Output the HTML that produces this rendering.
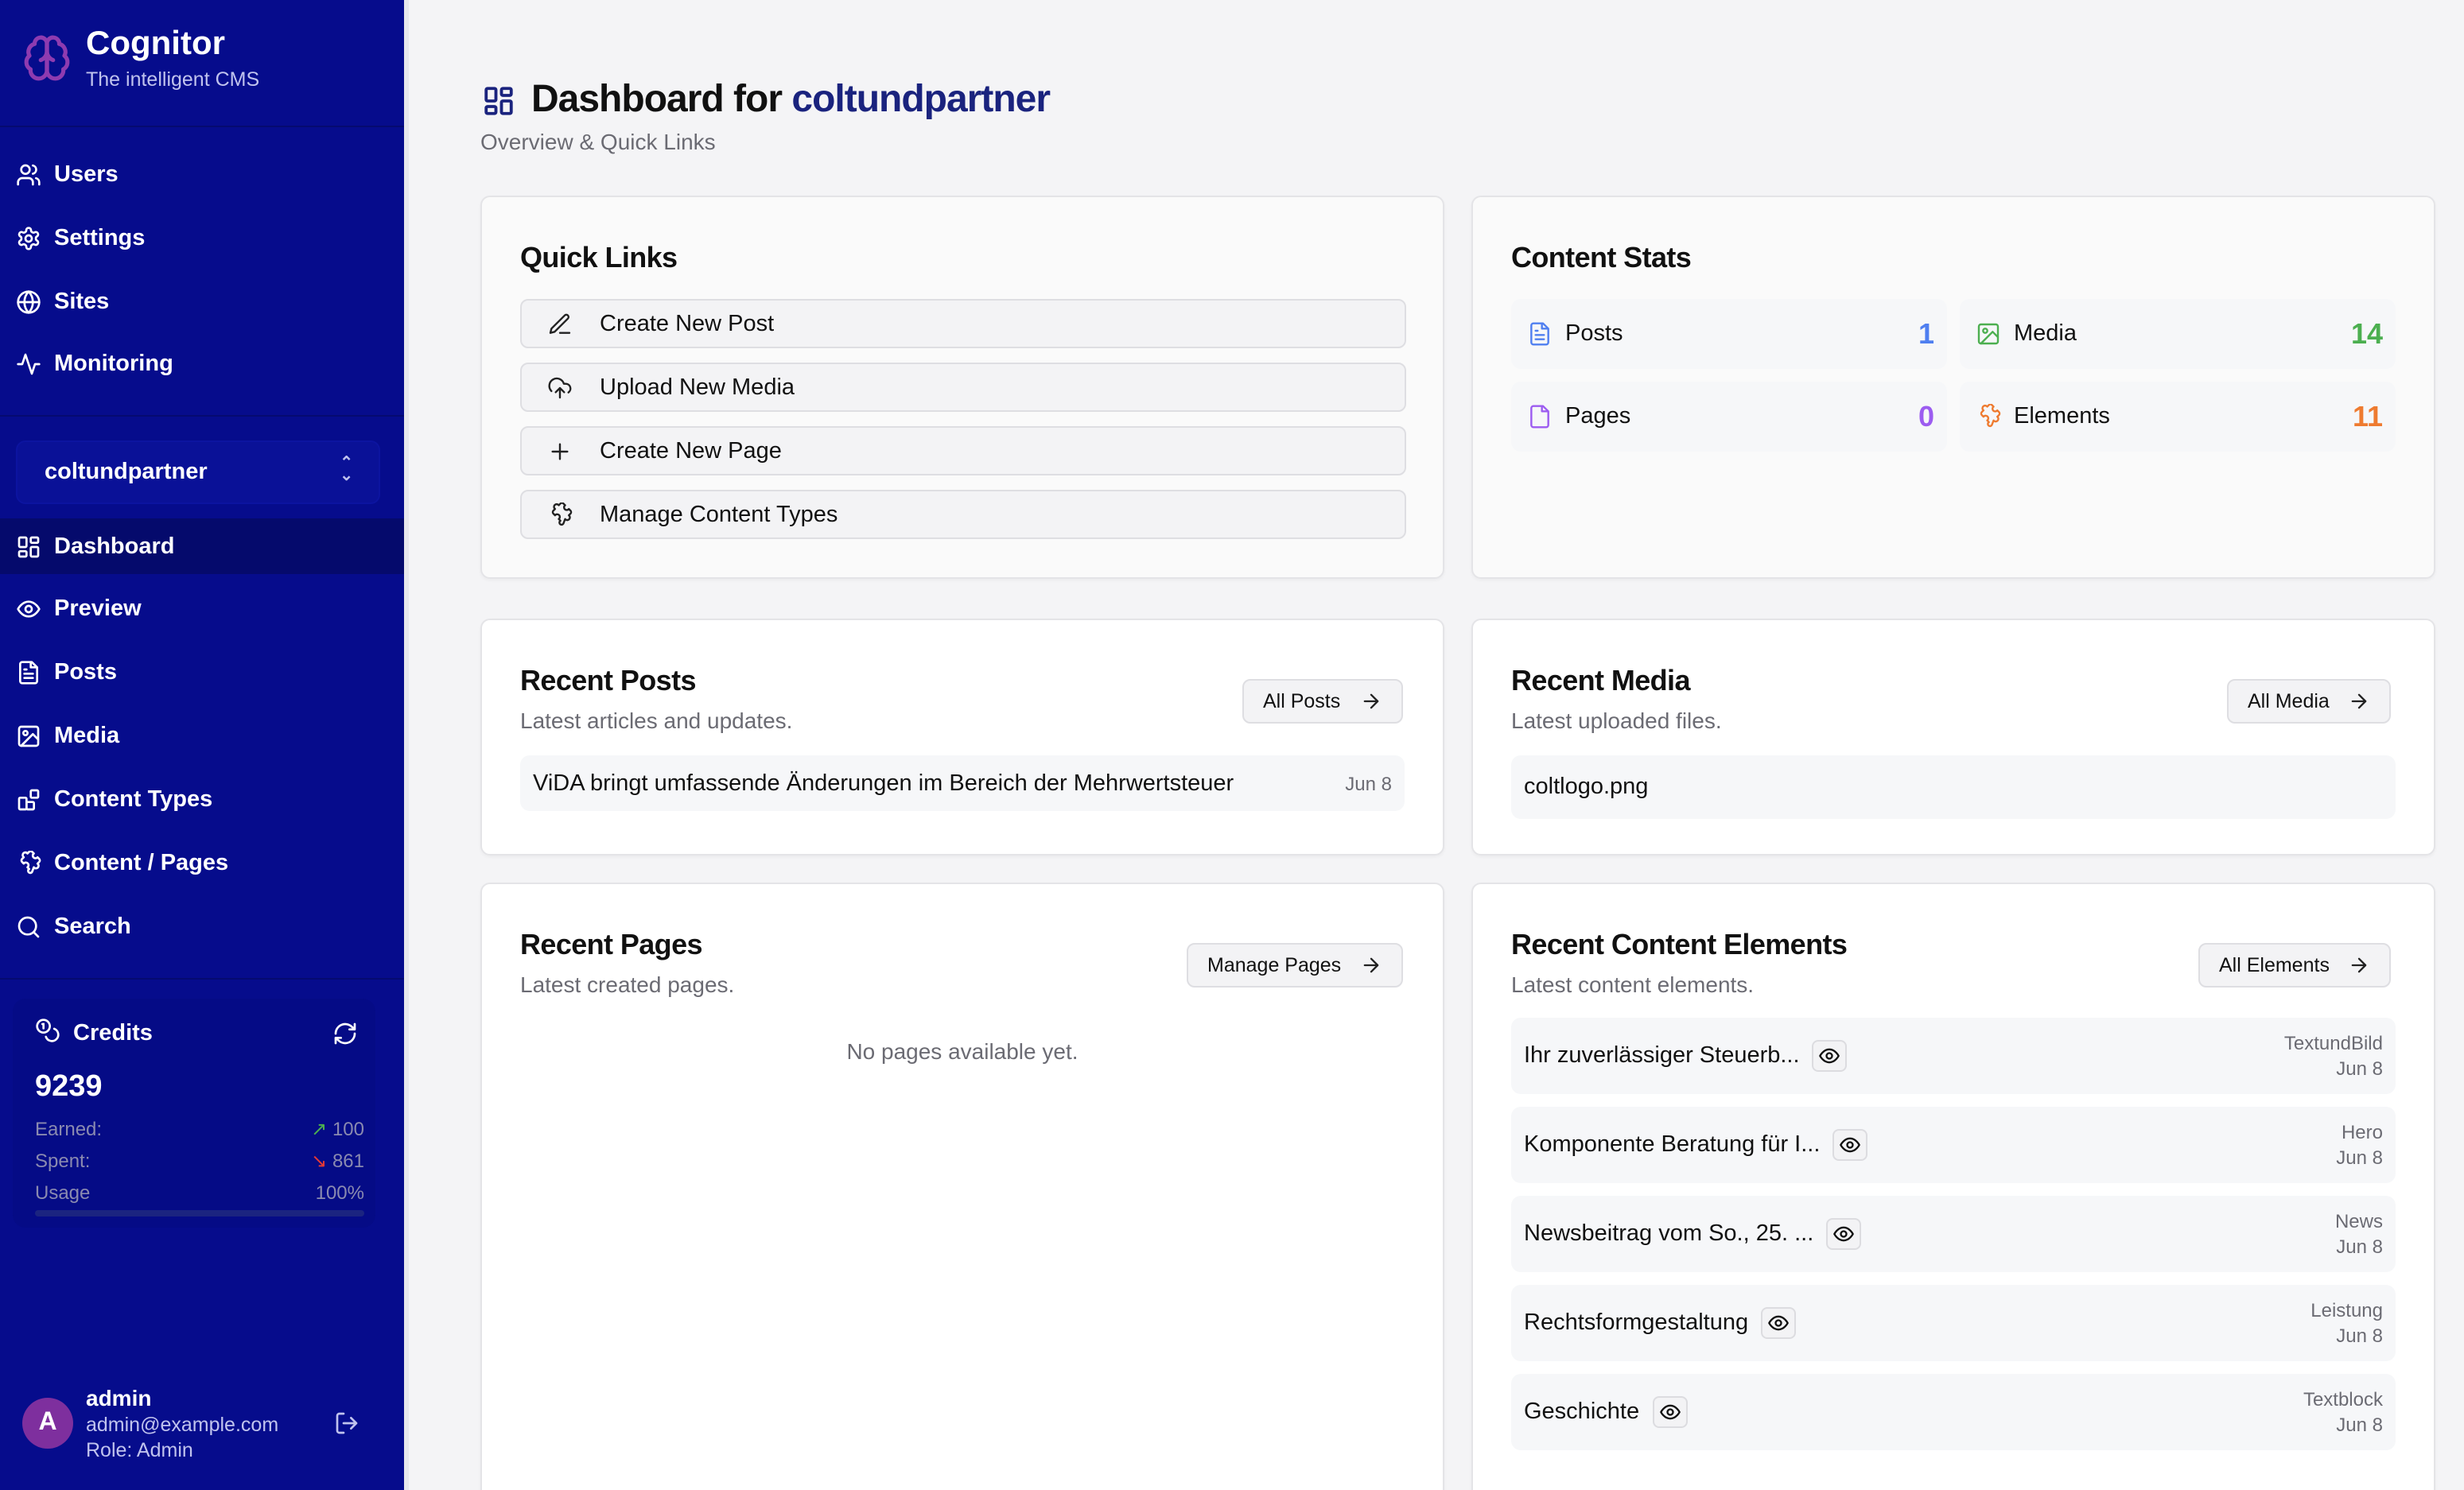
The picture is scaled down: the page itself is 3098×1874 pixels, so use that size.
<!DOCTYPE html>
<html><head><meta charset="utf-8"><style>
*{box-sizing:border-box;margin:0;padding:0}
html,body{width:3098px;height:1874px;overflow:hidden;background:#f4f4f6}
#w{width:1549px;height:937px;transform:scale(2);transform-origin:0 0;position:relative;font-family:"Liberation Sans",sans-serif;color:#111}
.a{position:absolute}
#sb{left:0;top:0;width:254px;height:937px;background:#060c8c;color:#fff}
.hr{position:absolute;left:0;width:254px;height:1px;background:#050a70}
.ni{position:absolute;left:0;width:254px;height:34px;display:flex;align-items:center;padding-left:10px;font-size:14.5px;font-weight:bold;color:#fff}
.ni svg{width:16px;height:16px;margin-right:8px;fill:none;stroke:#fff;stroke-width:2;stroke-linecap:round;stroke-linejoin:round}
.card{position:absolute;background:#fafafa;border:1px solid #e4e4e7;border-radius:6px;box-shadow:0 1px 2px rgba(0,0,0,.04)}
.h{position:absolute;font-size:18px;font-weight:bold;letter-spacing:-.3px}
.sub{position:absolute;font-size:14px;color:#6b6b73}
.ql{position:absolute;left:24px;width:557px;height:31px;background:#f3f3f5;border:1px solid #dedee2;border-radius:5px;display:flex;align-items:center;font-size:14.5px;padding-left:16px}
.ql svg{width:16px;height:16px;margin-right:17px;fill:none;stroke:#222;stroke-width:1.8;stroke-linecap:round;stroke-linejoin:round}
.st{position:absolute;width:274px;height:44px;background:#f6f7f9;border-radius:6px;display:flex;align-items:center;padding:0 8px 0 10px;font-size:14.5px}
.st svg{width:16px;height:16px;margin-right:8px;fill:none;stroke-width:1.8;stroke-linecap:round;stroke-linejoin:round}
.st b{margin-left:auto;font-size:18px}
.btn{position:absolute;height:28px;background:#f3f3f5;border:1px solid #dedee2;border-radius:5px;display:flex;align-items:center;padding:0 12px;font-size:12.5px}
.btn svg{width:14px;height:14px;margin-left:12px;fill:none;stroke:#222;stroke-width:2;stroke-linecap:round;stroke-linejoin:round}
.row{position:absolute;left:24px;width:556px;background:#f6f7f9;border-radius:6px;font-size:14.5px;display:flex;align-items:center;padding:0 8px}
.eye{display:inline-flex;align-items:center;justify-content:center;width:22px;height:20px;border:1px solid #dcdce0;border-radius:4px;margin-left:8px;background:#f3f3f5}
.eye svg{width:14px;height:14px;fill:none;stroke:#111;stroke-width:2}
.meta{margin-left:auto;text-align:right;font-size:12px;color:#6b6b73;line-height:16px}
</style></head><body><div id="w">
<div id="sb" class="a">
 <svg class="a" style="left:14px;top:21px" width="31" height="31" viewBox="0 0 24 24" fill="none" stroke="#8e3bb0" stroke-width="2" stroke-linecap="round" stroke-linejoin="round"><path d="M12 5a3 3 0 1 0-5.997.125 4 4 0 0 0-2.526 5.77 4 4 0 0 0 .556 6.588A4 4 0 1 0 12 18Z"/><path d="M12 5a3 3 0 1 1 5.997.125 4 4 0 0 1 2.526 5.77 4 4 0 0 1-.556 6.588A4 4 0 1 1 12 18Z"/><path d="M12 5v13M9 13a4.5 4.5 0 0 0 3-4M15 13a4.5 4.5 0 0 1-3-4"/></svg>
 <div class="a" style="left:54px;top:16px;font-size:21px;font-weight:bold">Cognitor</div>
 <div class="a" style="left:54px;top:43px;font-size:12.5px;color:#c0c3ee">The intelligent CMS</div>
 <div class="hr" style="top:79px"></div>
 <div class="ni" style="top:93px"><svg viewBox="0 0 24 24"><path d="M16 21v-2a4 4 0 0 0-4-4H6a4 4 0 0 0-4 4v2"/><circle cx="9" cy="7" r="4"/><path d="M22 21v-2a4 4 0 0 0-3-3.9M16 3.1a4 4 0 0 1 0 7.8"/></svg>Users</div>
 <div class="ni" style="top:133px"><svg viewBox="0 0 24 24"><circle cx="12" cy="12" r="3"/><path d="M12.2 2h-.4a2 2 0 0 0-2 2v.2a2 2 0 0 1-1 1.7l-.4.3a2 2 0 0 1-2 0l-.2-.1a2 2 0 0 0-2.7.7l-.2.4a2 2 0 0 0 .7 2.7l.2.1a2 2 0 0 1 1 1.7v.5a2 2 0 0 1-1 1.7l-.2.1a2 2 0 0 0-.7 2.7l.2.4a2 2 0 0 0 2.7.7l.2-.1a2 2 0 0 1 2 0l.4.3a2 2 0 0 1 1 1.7v.2a2 2 0 0 0 2 2h.4a2 2 0 0 0 2-2v-.2a2 2 0 0 1 1-1.7l.4-.3a2 2 0 0 1 2 0l.2.1a2 2 0 0 0 2.7-.7l.2-.4a2 2 0 0 0-.7-2.7l-.2-.1a2 2 0 0 1-1-1.7v-.5a2 2 0 0 1 1-1.7l.2-.1a2 2 0 0 0 .7-2.7l-.2-.4a2 2 0 0 0-2.7-.7l-.2.1a2 2 0 0 1-2 0l-.4-.3a2 2 0 0 1-1-1.7V4a2 2 0 0 0-2-2z"/></svg>Settings</div>
 <div class="ni" style="top:173px"><svg viewBox="0 0 24 24"><circle cx="12" cy="12" r="10"/><path d="M12 2a14.5 14.5 0 0 0 0 20 14.5 14.5 0 0 0 0-20M2 12h20"/></svg>Sites</div>
 <div class="ni" style="top:212px"><svg viewBox="0 0 24 24"><path d="M22 12h-4l-3 9L9 3l-3 9H2"/></svg>Monitoring</div>
 <div class="hr" style="top:261px"></div>
 <div class="a" style="left:10px;top:277px;width:229px;height:40px;background:#0a1197;border:1px solid #0c14a0;border-radius:6px;font-size:14.5px;font-weight:bold;padding:11px 0 0 17px">coltundpartner<span class="a" style="right:16px;top:10px;font-size:10px;color:#c0c3ee;line-height:8px">⌃<br>⌄</span></div>
 <div class="ni" style="top:326px;height:35px;background:#050a6c"><svg viewBox="0 0 24 24"><rect x="3" y="3" width="7" height="9" rx="1"/><rect x="14" y="3" width="7" height="5" rx="1"/><rect x="14" y="12" width="7" height="9" rx="1"/><rect x="3" y="16" width="7" height="5" rx="1"/></svg>Dashboard</div>
 <div class="ni" style="top:366px"><svg viewBox="0 0 24 24"><path d="M2 12s3.5-7 10-7 10 7 10 7-3.5 7-10 7-10-7-10-7z"/><circle cx="12" cy="12" r="3"/></svg>Preview</div>
 <div class="ni" style="top:406px"><svg viewBox="0 0 24 24"><path d="M15 2H6a2 2 0 0 0-2 2v16a2 2 0 0 0 2 2h12a2 2 0 0 0 2-2V7z"/><path d="M14 2v5h5M8 13h8M8 17h8M8 9h2"/></svg>Posts</div>
 <div class="ni" style="top:446px"><svg viewBox="0 0 24 24"><rect x="3" y="3" width="18" height="18" rx="2"/><circle cx="9" cy="9" r="2"/><path d="m21 15-5-5L5 21"/></svg>Media</div>
 <div class="ni" style="top:486px"><svg viewBox="0 0 24 24"><rect x="3" y="10" width="7" height="11" rx="1"/><rect x="14" y="3" width="7" height="7" rx="1"/><rect x="10" y="14" width="7" height="7" rx="1"/></svg>Content Types</div>
 <div class="ni" style="top:526px"><svg viewBox="0 0 24 24"><path d="M15.4 19.6a2 2 0 1 1-2.9-2.4l-1.6-1.6a2.5 2.5 0 1 0-3.5-3.5L5.8 10.5a2 2 0 0 1 0-2.8l1.6-1.6a2.5 2.5 0 1 1 3.5-3.5l1.6-1.6a2 2 0 0 1 2.8 0l1.6 1.6a2.5 2.5 0 1 0 3.5 3.5l1.6 1.6a2 2 0 0 1 0 2.8l-1.6 1.6a2.5 2.5 0 1 1-3.5 3.5z"/></svg>Content / Pages</div>
 <div class="ni" style="top:566px"><svg viewBox="0 0 24 24"><circle cx="11" cy="11" r="8"/><path d="m21 21-4.3-4.3"/></svg>Search</div>
 <div class="hr" style="top:615px"></div>
 <div class="a" style="left:8px;top:628px;width:228px;height:144px;background:#050b86;border-radius:8px"></div>
 <svg class="a" style="left:22px;top:640px" width="16" height="16" viewBox="0 0 24 24" fill="none" stroke="#fff" stroke-width="2" stroke-linecap="round"><circle cx="8" cy="8" r="6"/><path d="M18.1 10.4A6 6 0 1 1 10.3 18M7 6h1v4"/></svg>
 <div class="a" style="left:46px;top:642px;font-size:14.5px;font-weight:bold">Credits</div>
 <svg class="a" style="left:209px;top:642px" width="16" height="16" viewBox="0 0 24 24" fill="none" stroke="#fff" stroke-width="2" stroke-linecap="round" stroke-linejoin="round"><path d="M3 12a9 9 0 0 1 15-6.7L21 8M21 3v5h-5M21 12a9 9 0 0 1-15 6.7L3 16M8 16H3v5"/></svg>
 <div class="a" style="left:22px;top:673px;font-size:19px;font-weight:bold">9239</div>
 <div class="a" style="left:22px;top:700px;width:207px;font-size:12px;color:#8a8ab0;line-height:20px">Earned:<span style="float:right"><span style="color:#4caf50">↗</span> 100</span><br>Spent:<span style="float:right"><span style="color:#e53935">↘</span> 861</span><br>Usage<span style="float:right">100%</span></div>
 <div class="a" style="left:22px;top:761px;width:207px;height:4px;border-radius:2px;background:#1b2480"></div>
 <div class="a" style="left:14px;top:879px;width:32px;height:32px;border-radius:50%;background:#7e2f9e;font-size:16px;font-weight:bold;text-align:center;line-height:32px">A</div>
 <div class="a" style="left:54px;top:871px;font-size:14px;font-weight:bold">admin</div>
 <div class="a" style="left:54px;top:888px;font-size:12.5px;color:#c0c3ee;line-height:16px">admin@example.com<br>Role: Admin</div>
 <svg class="a" style="left:210px;top:887px" width="16" height="16" viewBox="0 0 24 24" fill="none" stroke="#c0c3ee" stroke-width="2" stroke-linecap="round" stroke-linejoin="round"><path d="M9 21H5a2 2 0 0 1-2-2V5a2 2 0 0 1 2-2h4M16 17l5-5-5-5M21 12H9"/></svg>
</div>
<div class="a" style="left:254px;top:0;width:3px;height:937px;background:#e8e8ec"></div>

<svg class="a" style="left:303px;top:53px" width="21" height="21" viewBox="0 0 24 24" fill="none" stroke="#1a237e" stroke-width="2.2"><rect x="3" y="3" width="7" height="9" rx="1"/><rect x="14" y="3" width="7" height="5" rx="1"/><rect x="14" y="12" width="7" height="9" rx="1"/><rect x="3" y="16" width="7" height="5" rx="1"/></svg>
<div class="a" style="left:334px;top:49px;font-size:24px;font-weight:bold;letter-spacing:-.5px">Dashboard for <span style="color:#1a237e">coltundpartner</span></div>
<div class="a" style="left:302px;top:81px;font-size:14px;color:#6b6b73">Overview &amp; Quick Links</div>

<div class="card" style="left:302px;top:123px;width:606px;height:241px">
 <div class="h" style="left:24px;top:28px">Quick Links</div>
 <div class="ql" style="top:64px"><svg viewBox="0 0 24 24"><path d="M12 20h9M16.5 3.5a2.1 2.1 0 0 1 3 3L7 19l-4 1 1-4z"/></svg>Create New Post</div>
 <div class="ql" style="top:104px"><svg viewBox="0 0 24 24"><path d="M4 14.9A7 7 0 1 1 15.7 8h1.8a4.5 4.5 0 0 1 2.5 8.2M12 12v9M8 16l4-4 4 4"/></svg>Upload New Media</div>
 <div class="ql" style="top:144px"><svg viewBox="0 0 24 24"><path d="M5 12h14M12 5v14"/></svg>Create New Page</div>
 <div class="ql" style="top:184px"><svg viewBox="0 0 24 24"><path d="M15.4 19.6a2 2 0 1 1-2.9-2.4l-1.6-1.6a2.5 2.5 0 1 0-3.5-3.5L5.8 10.5a2 2 0 0 1 0-2.8l1.6-1.6a2.5 2.5 0 1 1 3.5-3.5l1.6-1.6a2 2 0 0 1 2.8 0l1.6 1.6a2.5 2.5 0 1 0 3.5 3.5l1.6 1.6a2 2 0 0 1 0 2.8l-1.6 1.6a2.5 2.5 0 1 1-3.5 3.5z"/></svg>Manage Content Types</div>
</div>

<div class="card" style="left:925px;top:123px;width:606px;height:241px">
 <div class="h" style="left:24px;top:28px">Content Stats</div>
 <div class="st" style="left:24px;top:64px"><svg viewBox="0 0 24 24" stroke="#4f7ff0"><path d="M15 2H6a2 2 0 0 0-2 2v16a2 2 0 0 0 2 2h12a2 2 0 0 0 2-2V7z"/><path d="M14 2v5h5M8 13h8M8 17h8M8 9h2"/></svg>Posts<b style="color:#4f7ff0">1</b></div>
 <div class="st" style="left:306px;top:64px"><svg viewBox="0 0 24 24" stroke="#4caf50"><rect x="3" y="3" width="18" height="18" rx="2"/><circle cx="9" cy="9" r="2"/><path d="m21 15-5-5L5 21"/></svg>Media<b style="color:#4caf50">14</b></div>
 <div class="st" style="left:24px;top:116px"><svg viewBox="0 0 24 24" stroke="#9c5cf0"><path d="M15 2H6a2 2 0 0 0-2 2v16a2 2 0 0 0 2 2h12a2 2 0 0 0 2-2V7z"/><path d="M14 2v5h5"/></svg>Pages<b style="color:#9c5cf0">0</b></div>
 <div class="st" style="left:306px;top:116px"><svg viewBox="0 0 24 24" stroke="#ee7b30"><path d="M15.4 19.6a2 2 0 1 1-2.9-2.4l-1.6-1.6a2.5 2.5 0 1 0-3.5-3.5L5.8 10.5a2 2 0 0 1 0-2.8l1.6-1.6a2.5 2.5 0 1 1 3.5-3.5l1.6-1.6a2 2 0 0 1 2.8 0l1.6 1.6a2.5 2.5 0 1 0 3.5 3.5l1.6 1.6a2 2 0 0 1 0 2.8l-1.6 1.6a2.5 2.5 0 1 1-3.5 3.5z"/></svg>Elements<b style="color:#ee7b30">11</b></div>
</div>

<div class="card" style="left:302px;top:389px;width:606px;height:149px;background:#fff">
 <div class="h" style="left:24px;top:28px">Recent Posts</div>
 <div class="sub" style="left:24px;top:55px">Latest articles and updates.</div>
 <div class="btn" style="left:478px;top:37px">All Posts<svg viewBox="0 0 24 24"><path d="M5 12h14M12 5l7 7-7 7"/></svg></div>
 <div class="row" style="top:85px;height:35px">ViDA bringt umfassende Änderungen im Bereich der Mehrwertsteuer<span class="meta">Jun 8</span></div>
</div>

<div class="card" style="left:925px;top:389px;width:606px;height:149px;background:#fff">
 <div class="h" style="left:24px;top:28px">Recent Media</div>
 <div class="sub" style="left:24px;top:55px">Latest uploaded files.</div>
 <div class="btn" style="left:474px;top:37px">All Media<svg viewBox="0 0 24 24"><path d="M5 12h14M12 5l7 7-7 7"/></svg></div>
 <div class="row" style="top:85px;height:40px">coltlogo.png</div>
</div>

<div class="card" style="left:302px;top:555px;width:606px;height:400px;background:#fff">
 <div class="h" style="left:24px;top:28px">Recent Pages</div>
 <div class="sub" style="left:24px;top:55px">Latest created pages.</div>
 <div class="btn" style="left:443px;top:37px">Manage Pages<svg viewBox="0 0 24 24"><path d="M5 12h14M12 5l7 7-7 7"/></svg></div>
 <div class="sub" style="left:0;width:604px;text-align:center;top:97px">No pages available yet.</div>
</div>

<div class="card" style="left:925px;top:555px;width:606px;height:400px;background:#fff">
 <div class="h" style="left:24px;top:28px">Recent Content Elements</div>
 <div class="sub" style="left:24px;top:55px">Latest content elements.</div>
 <div class="btn" style="left:456px;top:37px">All Elements<svg viewBox="0 0 24 24"><path d="M5 12h14M12 5l7 7-7 7"/></svg></div>
 <div class="row" style="top:84px;height:48px">Ihr zuverlässiger Steuerb...<span class="eye"><svg viewBox="0 0 24 24"><path d="M2 12s3.5-7 10-7 10 7 10 7-3.5 7-10 7-10-7-10-7z"/><circle cx="12" cy="12" r="3"/></svg></span><span class="meta">TextundBild<br>Jun 8</span></div>
 <div class="row" style="top:140px;height:48px">Komponente Beratung für I...<span class="eye"><svg viewBox="0 0 24 24"><path d="M2 12s3.5-7 10-7 10 7 10 7-3.5 7-10 7-10-7-10-7z"/><circle cx="12" cy="12" r="3"/></svg></span><span class="meta">Hero<br>Jun 8</span></div>
 <div class="row" style="top:196px;height:48px">Newsbeitrag vom So., 25. ...<span class="eye"><svg viewBox="0 0 24 24"><path d="M2 12s3.5-7 10-7 10 7 10 7-3.5 7-10 7-10-7-10-7z"/><circle cx="12" cy="12" r="3"/></svg></span><span class="meta">News<br>Jun 8</span></div>
 <div class="row" style="top:252px;height:48px">Rechtsformgestaltung<span class="eye"><svg viewBox="0 0 24 24"><path d="M2 12s3.5-7 10-7 10 7 10 7-3.5 7-10 7-10-7-10-7z"/><circle cx="12" cy="12" r="3"/></svg></span><span class="meta">Leistung<br>Jun 8</span></div>
 <div class="row" style="top:308px;height:48px">Geschichte<span class="eye"><svg viewBox="0 0 24 24"><path d="M2 12s3.5-7 10-7 10 7 10 7-3.5 7-10 7-10-7-10-7z"/><circle cx="12" cy="12" r="3"/></svg></span><span class="meta">Textblock<br>Jun 8</span></div>
</div>
</div></body></html>
